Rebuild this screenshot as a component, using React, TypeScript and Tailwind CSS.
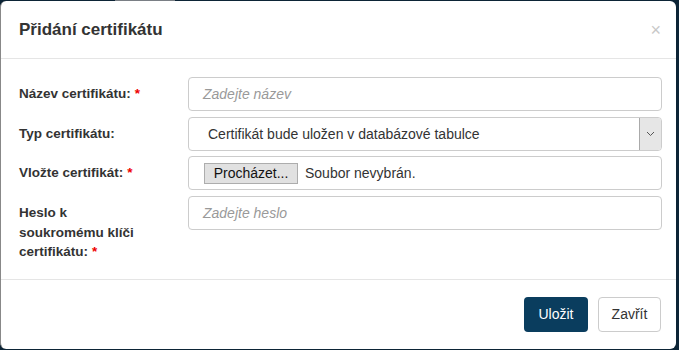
import React from "react";

const F = { fontFamily: '"Liberation Sans", Arial, sans-serif' };

function Label({ children, req }: { children: React.ReactNode; req?: boolean }) {
  return (
    <div className="w-[128px] shrink-0 pt-[7px] text-[13.5px] font-bold leading-[20px] text-[#333]">
      {children}
      {req && <span className="pl-[4px] text-[#e00]">*</span>}
    </div>
  );
}

export default function App() {
  return (
    <div className="relative h-[350px] w-[679px] overflow-hidden bg-[#0c2436]" style={F}>
      <div className="absolute left-[115px] top-0 h-[1px] w-[60px] bg-[#7a7f85]" />
      <div className="absolute left-0 top-[1px] flex h-[348px] w-[676px] flex-col rounded-[6px] border-l border-[#888] bg-white">
        <div className="flex h-[58px] items-center justify-between border-b border-[#e5e5e5] pl-[18px] pr-[15px]">
          <h4 className="text-[17px] font-bold text-[#333]">Přidání certifikátu</h4>
          <span className="text-[18px] leading-none text-[#c8c8c8]">×</span>
        </div>
        <div className="flex-1 border-b border-[#e5e5e5] pl-[18px] pr-[14px] pt-[18px]">
          <div className="flex gap-[41px]">
            <Label req>Název certifikátu:</Label>
            <div className="flex h-[34px] flex-1 items-center rounded-[4px] border border-[#ccc] px-[14px] text-[14px] italic text-[#999]">
              Zadejte název
            </div>
          </div>
          <div className="mt-[6px] flex gap-[41px]">
            <Label>Typ certifikátu:</Label>
            <div className="flex h-[34px] flex-1 items-center overflow-hidden rounded-[4px] border border-[#ccc] text-[14px] text-[#333]">
              <div className="flex-1 pl-[19px]">Certifikát bude uložen v databázové tabulce</div>
              <div className="flex h-full w-[22px] items-center justify-center border-l border-[#aaa] bg-[#e6e6e6]">
                <svg width="9" height="6" viewBox="0 0 9 6">
                  <path d="M1 1 L4.5 4.5 L8 1" fill="none" stroke="#555" strokeWidth="1" />
                </svg>
              </div>
            </div>
          </div>
          <div className="mt-[5px] flex gap-[41px]">
            <Label req>Vložte certifikát:</Label>
            <div className="flex h-[34px] flex-1 items-center rounded-[4px] border border-[#ccc] pl-[15px] text-[14px] text-[#333]">
              <div className="flex h-[21px] w-[94px] items-center justify-center border border-[#adadad] bg-[#e1e1e1] text-[14px] text-[#111]">
                Procházet...
              </div>
              <span className="ml-[7px]">Soubor nevybrán.</span>
            </div>
          </div>
          <div className="mt-[6px] flex gap-[41px]">
            <div className="w-[128px] shrink-0 pt-[7px] text-[13.5px] font-bold leading-[19.5px] text-[#333]">
              Heslo k soukromému klíči certifikátu:
              <span className="pl-[4px] text-[#e00]">*</span>
            </div>
            <div className="flex h-[34px] flex-1 items-center rounded-[4px] border border-[#ccc] px-[14px] text-[14px] italic text-[#999]">
              Zadejte heslo
            </div>
          </div>
        </div>
        <div className="flex h-[69px] items-start justify-end gap-[10px] pr-[15px] pt-[17px]">
          <div className="flex h-[35px] w-[64px] items-center justify-center rounded-[4px] bg-[#0a3d5e] text-[14px] text-white">
            Uložit
          </div>
          <div className="flex h-[35px] w-[63px] items-center justify-center rounded-[4px] border border-[#ccc] bg-white text-[14px] text-[#333]">
            Zavřít
          </div>
        </div>
      </div>
    </div>
  );
}
